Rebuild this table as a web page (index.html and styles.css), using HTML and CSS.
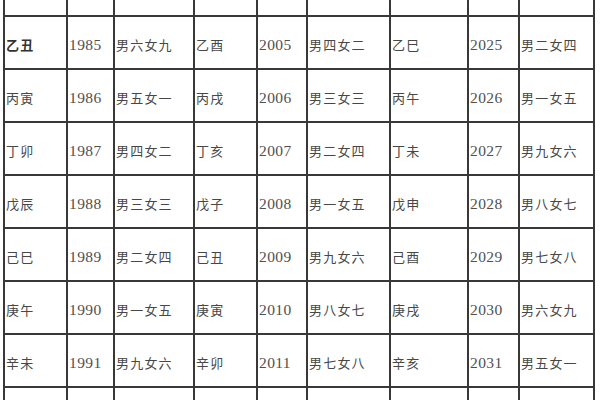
FILE: index.html
```html
<!DOCTYPE html>
<html lang="zh">
<head>
<meta charset="utf-8">
<title>命卦表</title>
<link rel="stylesheet" href="styles.css">
</head>
<body>
<table class="chart">
<colgroup>
<col class="w1"><col class="w2"><col class="w3">
<col class="w4"><col class="w5"><col class="w6">
<col class="w7"><col class="w8"><col class="w9">
</colgroup>
<tbody>
<tr><td></td><td class="yr"></td><td></td><td></td><td class="yr"></td><td></td><td></td><td class="yr"></td><td></td></tr>
<tr><td class="bold">乙丑</td><td class="yr">1985</td><td>男六女九</td><td>乙酉</td><td class="yr">2005</td><td>男四女二</td><td>乙巳</td><td class="yr">2025</td><td>男二女四</td></tr>
<tr><td>丙寅</td><td class="yr">1986</td><td>男五女一</td><td>丙戌</td><td class="yr">2006</td><td>男三女三</td><td>丙午</td><td class="yr">2026</td><td>男一女五</td></tr>
<tr><td>丁卯</td><td class="yr">1987</td><td>男四女二</td><td>丁亥</td><td class="yr">2007</td><td>男二女四</td><td>丁未</td><td class="yr">2027</td><td>男九女六</td></tr>
<tr><td>戊辰</td><td class="yr">1988</td><td>男三女三</td><td>戊子</td><td class="yr">2008</td><td>男一女五</td><td>戊申</td><td class="yr">2028</td><td>男八女七</td></tr>
<tr><td>己巳</td><td class="yr">1989</td><td>男二女四</td><td>己丑</td><td class="yr">2009</td><td>男九女六</td><td>己酉</td><td class="yr">2029</td><td>男七女八</td></tr>
<tr><td>庚午</td><td class="yr">1990</td><td>男一女五</td><td>庚寅</td><td class="yr">2010</td><td>男八女七</td><td>庚戌</td><td class="yr">2030</td><td>男六女九</td></tr>
<tr><td>辛未</td><td class="yr">1991</td><td>男九女六</td><td>辛卯</td><td class="yr">2011</td><td>男七女八</td><td>辛亥</td><td class="yr">2031</td><td>男五女一</td></tr>
<tr><td></td><td class="yr"></td><td></td><td></td><td class="yr"></td><td></td><td></td><td class="yr"></td><td></td></tr>
</tbody>
</table>
</body>
</html>
```
FILE: styles.css
```css
html, body {
  margin: 0;
  padding: 0;
  background: #ffffff;
}
body {
  width: 600px;
  height: 400px;
  overflow: hidden;
}
.chart {
  border-collapse: collapse;
  table-layout: fixed;
  width: 592px;
  margin: -38px 0 0 3px;
  font-family: "Liberation Serif", "Noto Sans CJK SC", serif;
  font-size: 13px;
  letter-spacing: 1.2px;
  color: #474747;
}
.chart tr {
  height: 53px;
}
.chart td {
  border: 2px solid #383838;
  padding: 4px 0 0 1px;
  vertical-align: middle;
  white-space: nowrap;
  overflow: hidden;
}
.chart td.yr {
  font-size: 15.5px;
  letter-spacing: 0.4px;
  color: #505050;
}
.chart td.bold {
  font-weight: bold;
  color: #333333;
}
.w1 { width: 63px; }
.w2 { width: 47px; }
.w3 { width: 80px; }
.w4 { width: 63px; }
.w5 { width: 50px; }
.w6 { width: 83px; }
.w7 { width: 78px; }
.w8 { width: 51px; }
.w9 { width: 75px; }
```
